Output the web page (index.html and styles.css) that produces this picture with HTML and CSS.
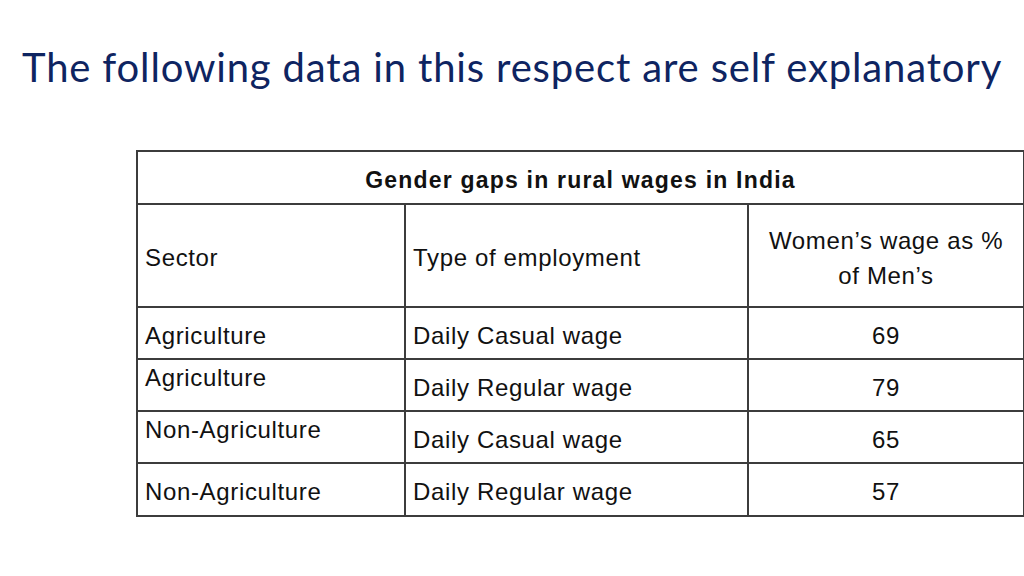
FILE: index.html
```html
<!DOCTYPE html>
<html>
<head>
<meta charset="utf-8">
<link rel="stylesheet" href="styles.css">
</head>
<body>
<h1 class="title">The following data in this respect are self explanatory</h1>
<div class="table-wrap">
<table class="wages">
  <colgroup>
    <col class="c1"><col class="c2"><col class="c3">
  </colgroup>
  <tr class="caption-row"><th colspan="3">Gender gaps in rural wages in India</th></tr>
  <tr class="head-row">
    <td>Sector</td>
    <td>Type of employment</td>
    <td class="num">Women’s wage as %<br>of Men’s</td>
  </tr>
  <tr class="row"><td class="low">Agriculture</td><td class="low">Daily Casual wage</td><td class="num low">69</td></tr>
  <tr class="row"><td class="top">Agriculture</td><td class="low">Daily Regular wage</td><td class="num low">79</td></tr>
  <tr class="row"><td class="top">Non-Agriculture</td><td class="low">Daily Casual wage</td><td class="num low">65</td></tr>
  <tr class="row last"><td class="low">Non-Agriculture</td><td class="low">Daily Regular wage</td><td class="num low">57</td></tr>
</table>
</div>
</body>
</html>
```

FILE: styles.css
```css
html, body {
  margin: 0;
  padding: 0;
  background: #ffffff;
}

.title {
  margin: 0;
  padding: 43px 0 0 22px;
  height: 106px;
  box-sizing: border-box;
  font-family: "Lato", "Open Sans", sans-serif;
  font-weight: 400;
  font-size: 40px;
  line-height: 48px;
  color: #0e2461;
  white-space: nowrap;
  letter-spacing: 0.85px;
}

.table-wrap {
  padding: 44px 0 0 136px;
}

.wages {
  border-collapse: collapse;
  width: 887px;
  font-family: "Liberation Sans", Arial, sans-serif;
  font-size: 24px;
  letter-spacing: 0.65px;
  color: #111111;
  table-layout: fixed;
}

.c1 { width: 268px; }
.c2 { width: 343px; }
.c3 { width: 276px; }

.wages th,
.wages td {
  border: 2px solid #3c3c3c;
  padding: 0 0 0 7px;
  vertical-align: middle;
  text-align: left;
  font-weight: 400;
}

.wages td + td {
  border-left-color: #111111;
}

.caption-row th {
  height: 53px;
  text-align: center;
  font-weight: 700;
  font-size: 23px;
  letter-spacing: 1.2px;
  padding: 5px 0 0 0;
  box-sizing: border-box;
}

.head-row td {
  height: 103px;
  line-height: 35px;
  padding-top: 4px;
  box-sizing: border-box;
}

.row td {
  height: 52px;
  box-sizing: border-box;
}

.row.last td {
  height: 53px;
}

.wages td.num {
  text-align: center;
  padding-left: 0;
}

.wages td.low {
  padding-top: 5px;
}

.wages td.top {
  vertical-align: top;
  padding-top: 4px;
}
```
